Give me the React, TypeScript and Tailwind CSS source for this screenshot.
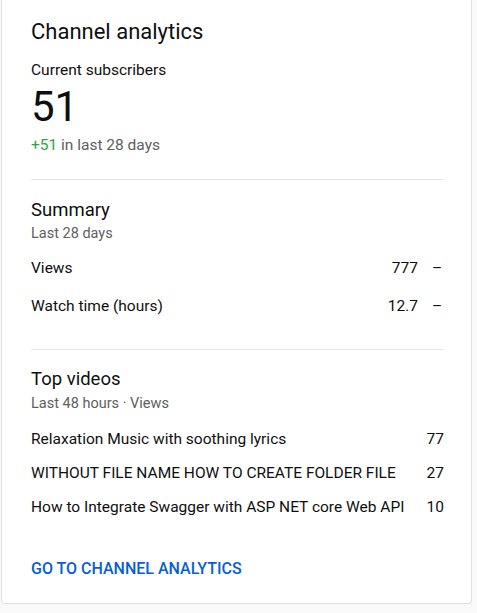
import React from 'react';

const topVideos = [
  { title: 'Relaxation Music with soothing lyrics', views: '77' },
  { title: 'WITHOUT FILE NAME HOW TO CREATE FOLDER FILE', views: '27' },
  { title: 'How to Integrate Swagger with ASP NET core Web API', views: '10' },
];

const App = () => {
  return (
    <div className="min-h-screen bg-[#f9f9f9] pl-px" style={{ fontFamily: 'Roboto, "Liberation Sans", sans-serif' }}>
      <div className="w-[471px] bg-white border-x border-b border-[#e0e0e0] rounded-b-[4px] pt-[18px] pb-[24px] pl-[29px] pr-[27px] text-[#0f0f0f]">
        {/* Header */}
        <h2 className="text-[22px] leading-[28px] font-normal">Channel analytics</h2>
        <div className="mt-[14px] text-[15.5px] leading-[20px]">Current subscribers</div>
        <div className="mt-[3px] text-[42px] leading-[48px]">51</div>
        <div className="mt-[4px] text-[15.5px] leading-[20px] text-[#606060]">
          <span className="text-[#2ba640]">+51</span> in last 28 days
        </div>

        <div className="mt-[24px] border-t border-[#e5e5e5]" />

        {/* Summary */}
        <h3 className="mt-[18px] text-[18.5px] leading-[24px] font-normal">Summary</h3>
        <div className="mt-[3px] text-[14.5px] leading-[18px] text-[#606060]">Last 28 days</div>
        <div className="mt-[15px] flex items-center text-[15.5px] leading-[20px]">
          <span className="flex-1">Views</span>
          <span>777</span>
          <span className="ml-[12px] w-[14px] text-center">–</span>
        </div>
        <div className="mt-[18px] flex items-center text-[15.5px] leading-[20px]">
          <span className="flex-1">Watch time (hours)</span>
          <span>12.7</span>
          <span className="ml-[12px] w-[14px] text-center">–</span>
        </div>

        <div className="mt-[33px] border-t border-[#e5e5e5]" />

        {/* Top videos */}
        <h3 className="mt-[17px] text-[18.5px] leading-[24px] font-normal">Top videos</h3>
        <div className="mt-[4px] text-[14.5px] leading-[18px] text-[#606060]">Last 48 hours · Views</div>
        <div className="mt-[16px] flex flex-col gap-[14px]">
          {topVideos.map((v, i) => (
            <div key={i} className="flex items-center text-[15.5px] leading-[20px]">
              <span className="flex-1 min-w-0 truncate">{v.title}</span>
              <span className="pl-[13px]">{v.views}</span>
            </div>
          ))}
        </div>

        <div className="mt-[42px] text-[16px] leading-[20px] font-medium text-[#065fd4]">GO TO CHANNEL ANALYTICS</div>
      </div>
    </div>
  );
};

export default App;
